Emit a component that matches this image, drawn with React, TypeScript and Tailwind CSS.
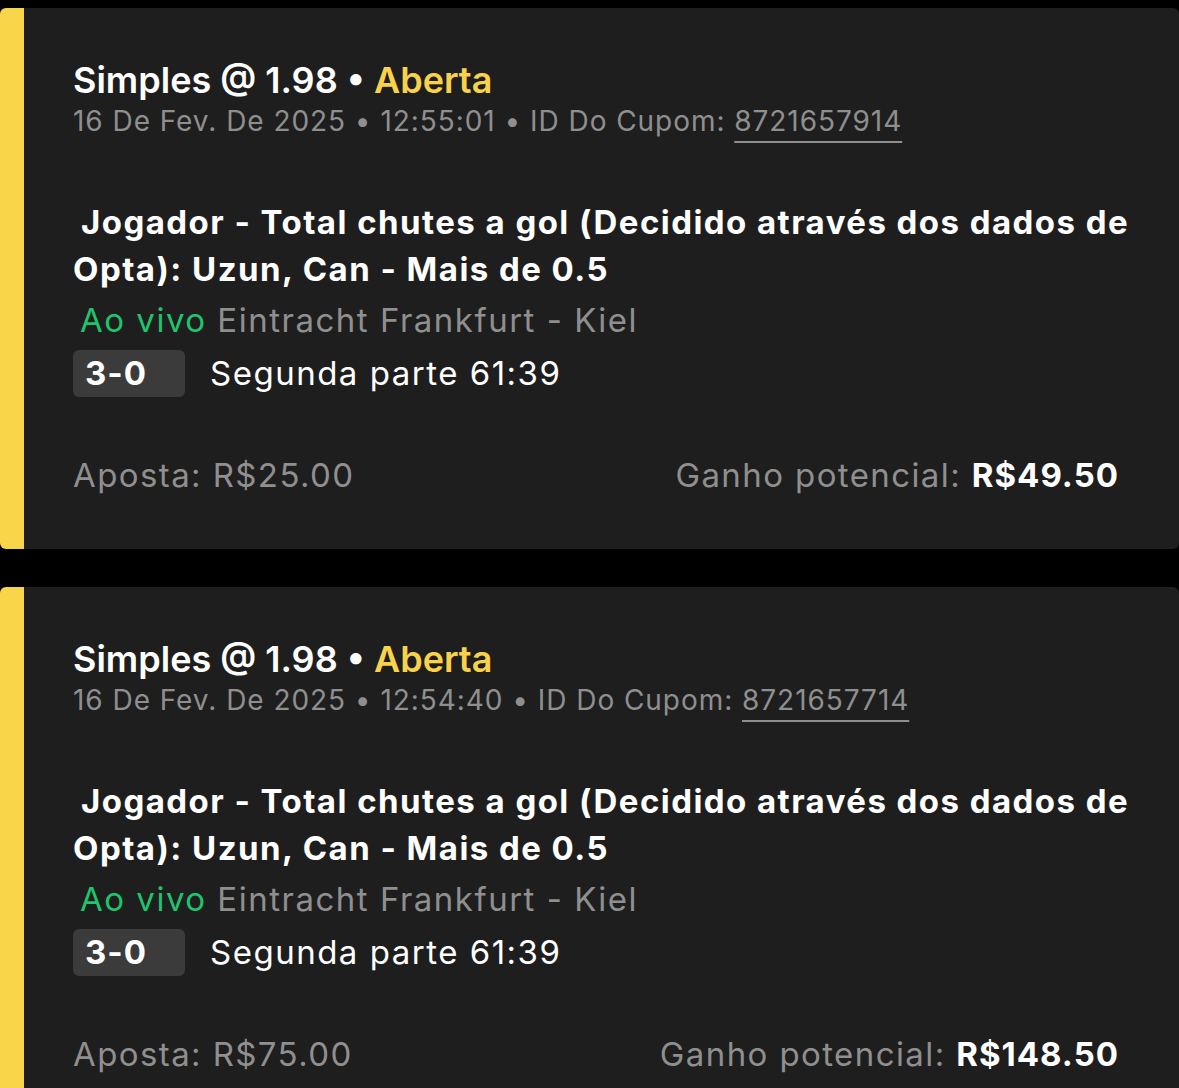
const font = { fontFamily: "Inter, 'Noto Sans', sans-serif" };

type Bet = {
  time: string;
  coupon: string;
  stake: string;
  win: string;
};

const bets: Bet[] = [
  { time: "12:55:01", coupon: "8721657914", stake: "R$25.00", win: "R$49.50" },
  { time: "12:54:40", coupon: "8721657714", stake: "R$75.00", win: "R$148.50" },
];

function BetCard({ bet }: { bet: Bet }) {
  return (
    <div className="flex h-[541px] shrink-0 overflow-hidden rounded-md bg-[#1e1e1e]">
      <div className="w-6 shrink-0 bg-[#f9d54a]" />
      <div className="flex min-w-0 flex-1 flex-col pl-[49px] pr-[60px] pt-[50px]">
        <div className="text-[36px] font-semibold leading-[44px] text-white">
          Simples @ 1.98 • <span className="text-[#f7d24a]">Aberta</span>
        </div>
        <div className="mt-[1px] text-[28px] leading-[36px] tracking-[0.95px] text-[#8f8f8f]">
          16 De Fev. De 2025 • {bet.time} • ID Do Cupom:{" "}
          <span className="underline decoration-2 underline-offset-[10px]">{bet.coupon}</span>
        </div>

        <div className="mt-[60px] whitespace-nowrap text-[33px] font-bold leading-[47px] tracking-[1.45px] text-white">
          <div className="pl-[8px]">Jogador - Total chutes a gol (Decidido através dos dados de</div>
          <div>Opta): Uzun, Can - Mais de 0.5</div>
        </div>
        <div className="mt-[3px] pl-[7px] text-[33px] leading-[48px] tracking-[1.5px] text-[#8f8f8f]">
          <span className="text-[#1fc46c]">Ao vivo</span> Eintracht Frankfurt - Kiel
        </div>
        <div className="mt-[5px] flex items-center gap-[25px]">
          <div className="flex h-[47px] w-[112px] items-center rounded-md bg-[#3b3b3b] pl-3 text-[33px] font-bold tracking-[1px] text-white">
            3-0
          </div>
          <div className="text-[33px] tracking-[1.5px] text-white">Segunda parte 61:39</div>
        </div>

        <div className="mt-[56px] flex items-center justify-between text-[33px] leading-[40px] tracking-[1.4px] text-[#8f8f8f]">
          <div>Aposta: {bet.stake}</div>
          <div>
            Ganho potencial: <span className="font-bold tracking-[1px] text-white">{bet.win}</span>
          </div>
        </div>
      </div>
    </div>
  );
}

export default function App() {
  return (
    <div className="flex h-[1088px] flex-col gap-[38px] overflow-hidden bg-black pt-2" style={font}>
      {bets.map((b) => (
        <BetCard key={b.coupon} bet={b} />
      ))}
    </div>
  );
}
